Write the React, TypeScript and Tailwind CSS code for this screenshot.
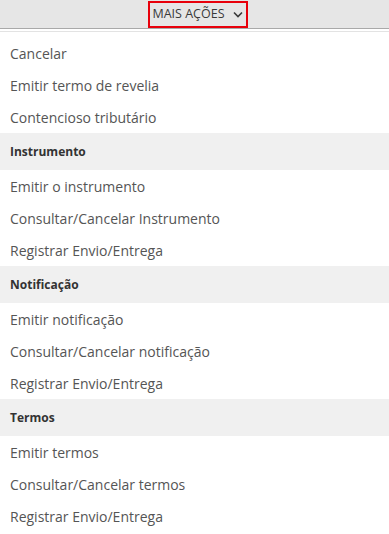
import React from 'react';

const font = { fontFamily: '"Open Sans", "Liberation Sans", sans-serif' };

const groups: { title?: string; items: string[] }[] = [
  { items: ['Cancelar', 'Emitir termo de revelia', 'Contencioso tributário'] },
  { title: 'Instrumento', items: ['Emitir o instrumento', 'Consultar/Cancelar Instrumento', 'Registrar Envio/Entrega'] },
  { title: 'Notificação', items: ['Emitir notificação', 'Consultar/Cancelar notificação', 'Registrar Envio/Entrega'] },
  { title: 'Termos', items: ['Emitir termos', 'Consultar/Cancelar termos', 'Registrar Envio/Entrega'] },
];

export default function App() {
  return (
    <div className="w-[389px] h-[534px] bg-white overflow-hidden" style={font}>
      <div className="h-[29px] bg-[#e6e6e6] border-b border-[#a9a9a9] flex justify-center items-start">
        <div className="mt-px ml-[6px] h-[27px] w-[100px] border-2 border-[#e8000b] flex items-center justify-center gap-[8px] text-[12.5px] text-[#3a3a3a]">
          <span>MAIS AÇÕES</span>
          <svg width="10" height="7" viewBox="0 0 10 7" fill="none">
            <path d="M1 1.5 5 5.5 9 1.5" stroke="#3a3a3a" strokeWidth="1.6" />
          </svg>
        </div>
      </div>
      <div className="h-[3px] border-b border-[#e3e3e3]" />
      <div className="pt-[5px]">
        {groups.map((g, i) => (
          <div key={i}>
            {g.title && (
              <div className="h-[37px] bg-[#f0f0f0] flex items-center px-[10px] text-[12px] font-bold text-[#333]">
                {g.title}
              </div>
            )}
            {g.items.map((item, j) => (
              <div key={j} className="h-[32px] flex items-center px-[10px] text-[14px] text-[#555]">
                {item}
              </div>
            ))}
          </div>
        ))}
      </div>
    </div>
  );
}
